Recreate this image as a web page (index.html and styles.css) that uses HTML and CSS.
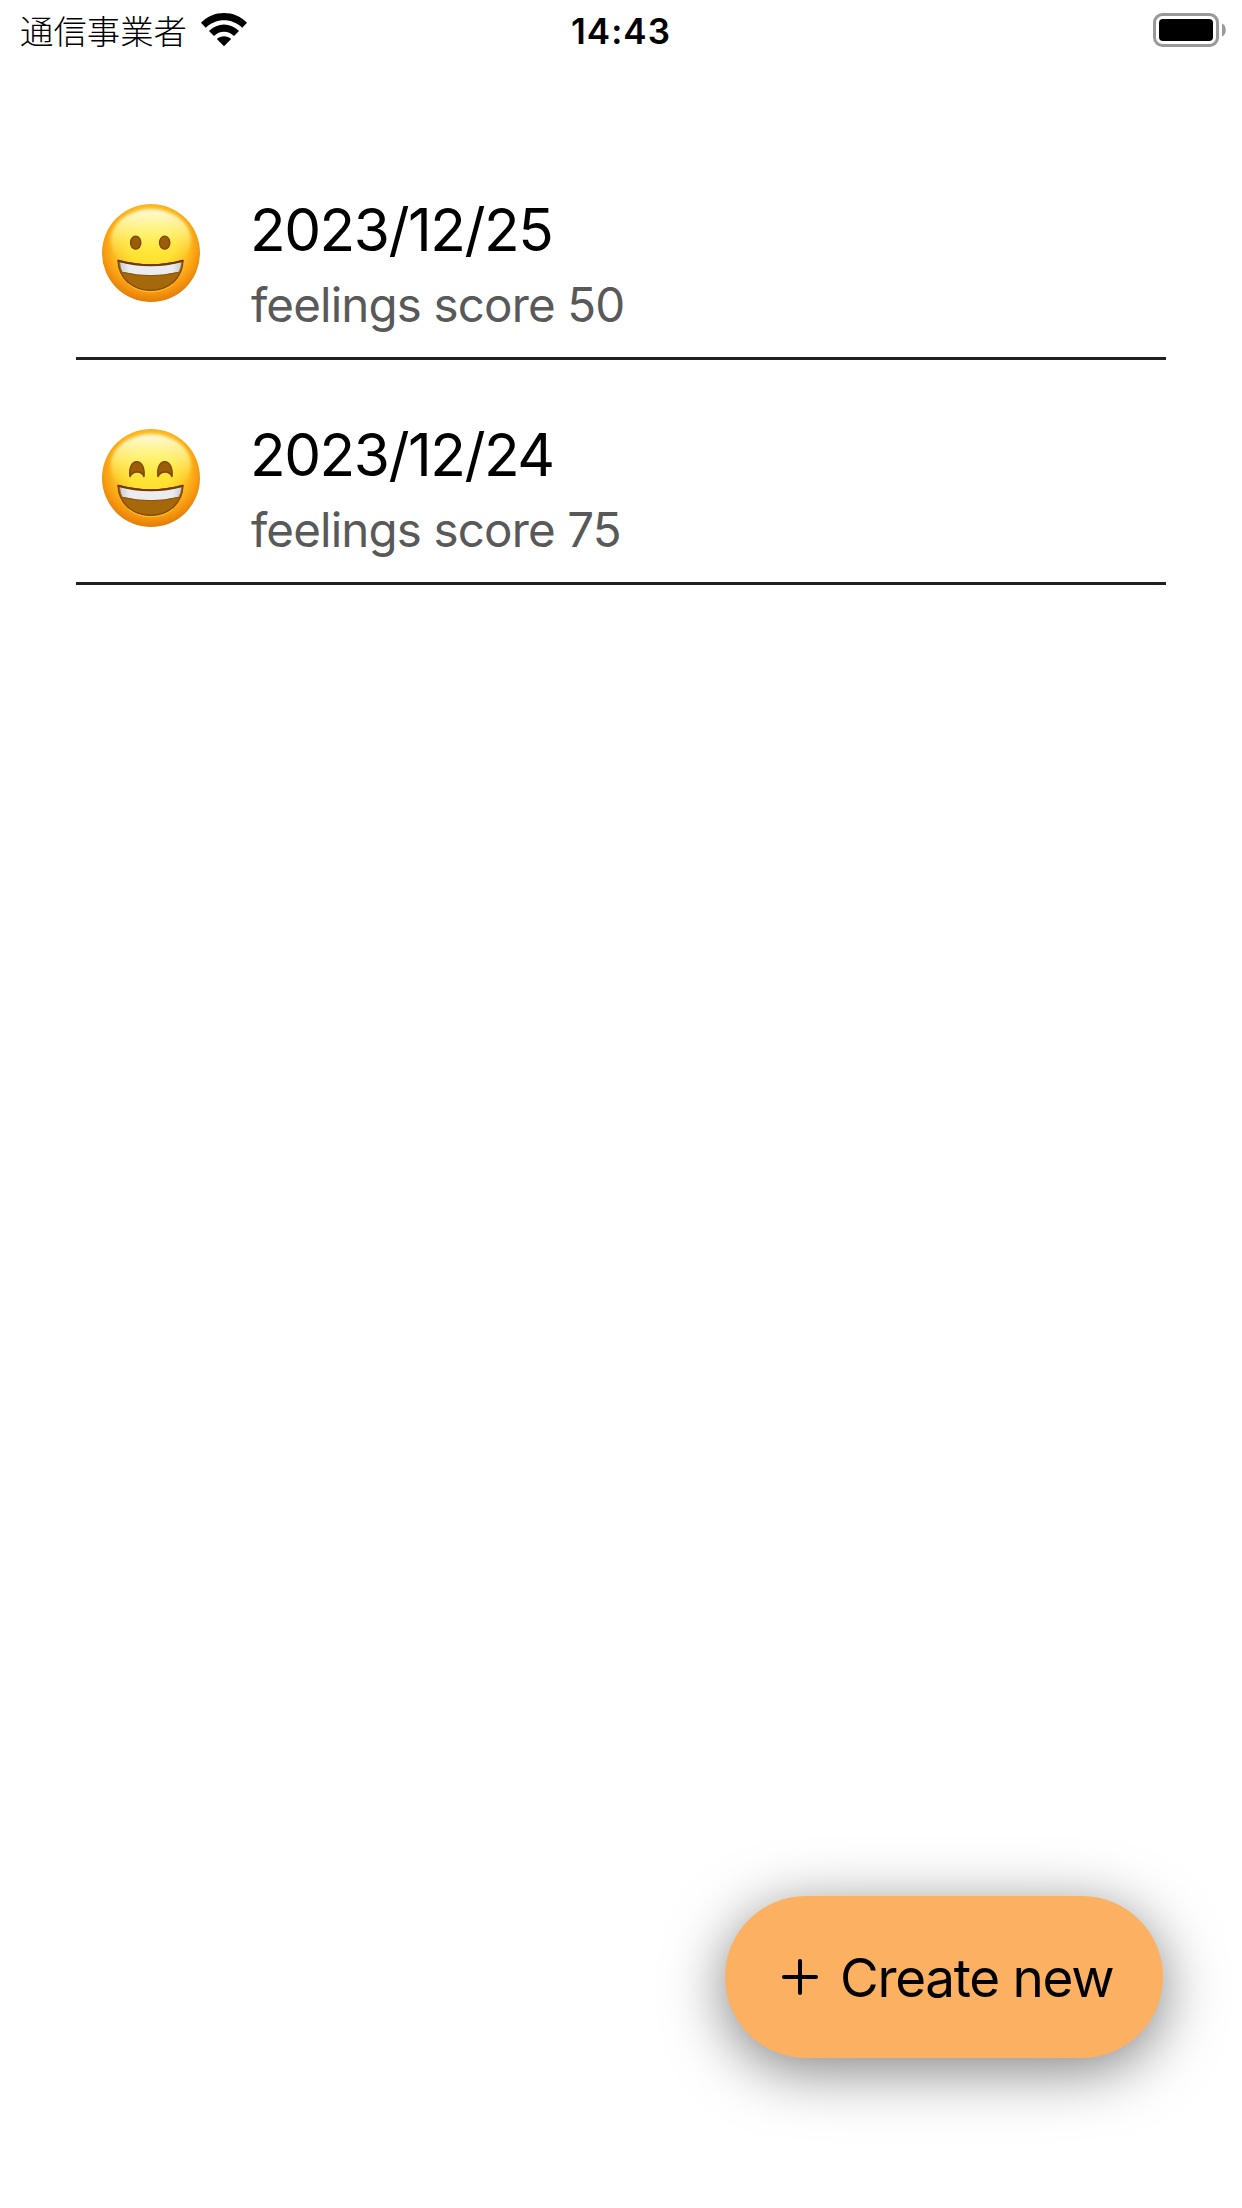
FILE: index.html
```
<!DOCTYPE html>
<html>
<head>
	<meta charset="utf-8">
	<title>Feelings</title>
	<link rel="stylesheet" href="styles.css">
</head>
<body>
	<div class="status">
		<div class="carrier">
			<span class="carrierName">通信事業者</span>
			<svg class="wifi" viewBox="0 0 46 34">
				<path d="M0 9.8C12.500-3.100 33.500-3.100 46 9.800L41.300 14.800C31 4.600 15 4.600 4.700 14.800Z"/>
				<path d="M8 18C16.300 9.200 29.700 9.200 38 18L33 23C27.500 17.200 18.500 17.200 13 23Z"/>
				<path d="M15.800 25.900C20 22.200 26 22.200 30.200 25.900L23 33.300Z"/>
			</svg>
		</div>
		<div class="time">14:43</div>
		<svg class="battery" viewBox="0 0 75 35">
			<rect class="shell" x="1.500" y="1.500" width="63" height="31" rx="8"/>
			<rect x="6" y="6" width="54" height="22" rx="4"/>
			<path class="nub" d="M69 10.500C74 12.500 74 21.500 69 23.500Z"/>
		</svg>
	</div>

	<!-- gradients shared by both faces -->
	<svg class="defs">
		<defs>
			<radialGradient id="skin" cx="147" cy="122" r="168" gradientUnits="userSpaceOnUse">
				<stop offset="0" stop-color="#ffe52e"/>
				<stop offset=".4" stop-color="#ffdf2e"/>
				<stop offset=".66" stop-color="#fdbe22"/>
				<stop offset=".84" stop-color="#f89b10"/>
				<stop offset="1" stop-color="#e58009"/>
			</radialGradient>
			<linearGradient id="shine" x1="0" y1="0" x2="0" y2="1">
				<stop offset="0" stop-color="#fffde8" stop-opacity=".95"/>
				<stop offset=".4" stop-color="#fff88a" stop-opacity=".7"/>
				<stop offset=".9" stop-color="#ffe52e" stop-opacity="0"/>
			</linearGradient>
			<linearGradient id="teeth" x1="0" y1="0" x2="1" y2="0">
				<stop offset="0" stop-color="#c9ccd4"/>
				<stop offset=".15" stop-color="#eaecf0"/>
				<stop offset=".85" stop-color="#eaecf0"/>
				<stop offset="1" stop-color="#c9ccd4"/>
			</linearGradient>
			<filter id="soft">
				<feGaussianBlur stdDeviation="5"/>
			</filter>
			<g id="head">
				<circle cx="147" cy="147" r="147" fill="url(#skin)"/>
				<ellipse cx="147" cy="108" rx="120" ry="92" fill="url(#shine)" filter="url(#soft)"/>
				<path d="M48 169Q147 196 243 169C242 222 200 259 146 259C92 259 49 222 48 169Z" fill="#a5680a" stroke="#81480a" stroke-width="4" stroke-linejoin="round"/>
				<path d="M54 175Q147 197 238 175Q237 192 229 204Q147 225 62 204Q55 192 54 175Z" fill="url(#teeth)"/>
				<path d="M49 170Q147 197 242 170" fill="none" stroke="#703b08" stroke-width="6" stroke-linecap="round"/>
				<path d="M62 205Q147 225 229 205" fill="none" stroke="#87500a" stroke-width="3"/>
				<path d="M80 240C115 271 178 271 213 240" fill="none" stroke="#ffd12d" stroke-width="3" opacity=".7"/>
			</g>
		</defs>
	</svg>

	<ul class="list">
		<li class="item">
			<svg class="face" viewBox="0 0 294 294">
				<use href="#head"/>
				<ellipse class="eye" cx="101" cy="116" rx="15.500" ry="19.500"/>
				<ellipse class="eye" cx="188" cy="116" rx="15.500" ry="19.500"/>
			</svg>
			<div class="text">
				<p class="date">2023/12/25</p>
				<p class="score">feelings score 50</p>
			</div>
		</li>
		<li class="item">
			<svg class="face" viewBox="0 0 294 294">
				<use href="#head"/>
				<path class="eye" d="M84 144C80 118 89 98 104 98C120 98 129 118 126 144C120 124 91 124 84 144Z"/>
				<path class="eye" d="M168 144C164 118 173 98 188 98C204 98 213 118 210 144C204 124 175 124 168 144Z"/>
			</svg>
			<div class="text">
				<p class="date">2023/12/24</p>
				<p class="score">feelings score 75</p>
			</div>
		</li>
	</ul>

	<button class="create">
		<svg class="plus" viewBox="0 0 36 36">
			<path d="M18 2V34M2 18H34"/>
		</svg>
		<span class="label">Create new</span>
	</button>
</body>
</html>
```
FILE: styles.css
```
* {
	padding: 0px;
	margin: 0px;
	box-sizing: border-box;
}
body {
	width: 1242px;
	height: 2208px;
	background: #fff;
	color: #000;
	font-family: Inter, "Liberation Sans", "Noto Sans CJK JP", sans-serif;
	display: flex;
	flex-direction: column;
	overflow: hidden;
}
.defs {
	position: absolute;
	width: 0;
	height: 0;
}
/* status bar */
.status {
	height: 60px;
	padding: 0 14px;
	display: grid;
	grid-template-columns: 1fr auto 1fr;
}
.carrier {
	padding-left: 6px;
	display: flex;
	align-items: flex-start;
}
.carrierName {
	width: 181px;
	font-family: "Noto Sans CJK JP", sans-serif;
	font-size: 33.4px;
	font-weight: 300;
	line-height: 60px;
	white-space: nowrap;
}
.wifi {
	width: 46px;
	height: 34px;
	margin-top: 13px;
}
.time {
	font-size: 35px;
	font-weight: 600;
	line-height: 62px;
	letter-spacing: 1px;
}
.battery {
	width: 75px;
	height: 35px;
	margin-top: 13px;
	justify-self: end;
}
.shell {
	fill: none;
	stroke: #999;
	stroke-width: 3;
}
.nub {
	fill: #999;
}
/* diary list */
.list {
	margin: 75px 76px 0;
	list-style: none;
}
.item {
	height: 225px;
	padding: 69px 0 0 26px;
	border-bottom: 3px solid #231f20;
	display: flex;
}
.face {
	width: 98px;
	height: 98px;
	margin-right: 51px;
	flex: none;
}
.eye {
	fill: #9c5d08;
	stroke: #7d4609;
	stroke-width: 4;
}
.date {
	margin: -10px 0 0 -1px;
	font-size: 58.5px;
	line-height: 72px;
	letter-spacing: -1.5px;
}
.score {
	margin-top: 9px;
	color: #595959;
	font-size: 47.5px;
	line-height: 60px;
	letter-spacing: -.85px;
}
/* floating button */
.create {
	width: 438px;
	height: 162px;
	margin: auto 79px 150px auto;
	padding-left: 57px;
	display: flex;
	align-items: center;
	gap: 22px;
	border: none;
	border-radius: 81px;
	background: #fcb062;
	box-shadow: 0 12px 60px rgba(0, 0, 0, .5);
	color: #000;
	font-family: inherit;
	white-space: nowrap;
}
.label {
	padding-top: 1px;
	font-size: 53px;
	letter-spacing: -1.3px;
}
.plus {
	width: 36px;
	height: 36px;
	flex: none;
	fill: none;
	stroke: #000;
	stroke-width: 4;
	stroke-linecap: round;
}
```
